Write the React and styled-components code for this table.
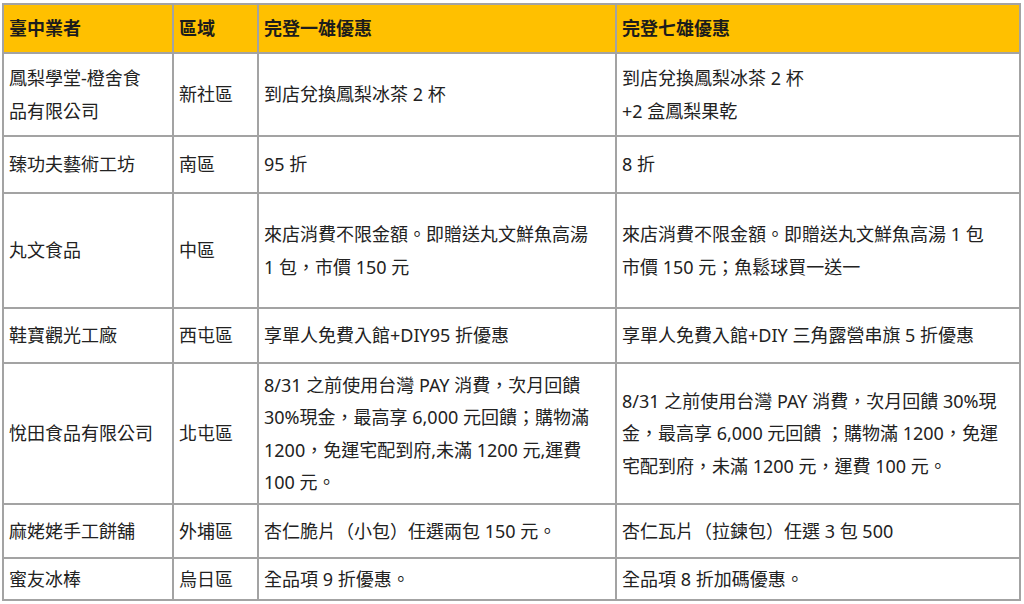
import React from "react";
import styled, { createGlobalStyle } from "styled-components";

const GlobalStyle = createGlobalStyle`
  html, body {
    margin: 0;
    padding: 0;
    background: #fff;
  }
  body {
    font-family: "Noto Sans", "Noto Sans CJK TC", sans-serif;
    color: #222;
  }
`;

const Page = styled.div`
  padding: 3px 0 0 2px;
`;

const Table = styled.table`
  border-collapse: collapse;
  table-layout: fixed;
  width: 1017px;
  font-size: 18px;
  line-height: 32.5px;
  font-feature-settings: "locl" 1;
`;

const Col = styled.col`
  width: ${(p) => p.$w}px;
`;

const HeadRow = styled.tr`
  height: 49px;
  background: #ffc000;
`;

const HeadCell = styled.th`
  border: 2px solid #a3a3a3;
  padding: 0 6px 0 5px;
  text-align: left;
  font-weight: 700;
  color: #1c1c1c;
  vertical-align: middle;
`;

const Row = styled.tr`
  height: ${(p) => p.$h}px;
`;

const Cell = styled.td`
  border: 2px solid #a3a3a3;
  padding: 0 6px 0 5px;
  vertical-align: middle;
  white-space: nowrap;
`;

const shops = [
  {
    h: 83,
    name: ["鳳梨學堂-橙舍食", "品有限公司"],
    area: "新社區",
    one: ["到店兌換鳳梨冰茶 2 杯"],
    seven: ["到店兌換鳳梨冰茶 2 杯", "+2 盒鳳梨果乾"],
  },
  {
    h: 57,
    name: ["臻功夫藝術工坊"],
    area: "南區",
    one: ["95 折"],
    seven: ["8 折"],
  },
  {
    h: 115,
    name: ["丸文食品"],
    area: "中區",
    one: ["來店消費不限金額。即贈送丸文鮮魚高湯", "1 包，市價 150 元"],
    seven: ["來店消費不限金額。即贈送丸文鮮魚高湯 1 包", "市價 150 元；魚鬆球買一送一"],
  },
  {
    h: 55,
    name: ["鞋寶觀光工廠"],
    area: "西屯區",
    one: ["享單人免費入館+DIY95 折優惠"],
    seven: ["享單人免費入館+DIY 三角露營串旗 5 折優惠"],
  },
  {
    h: 141,
    name: ["悅田食品有限公司"],
    area: "北屯區",
    one: [
      "8/31 之前使用台灣 PAY 消費，次月回饋",
      "30%現金，最高享 6,000 元回饋；購物滿",
      "1200，免運宅配到府,未滿 1200 元,運費",
      "100 元。",
    ],
    seven: [
      "8/31 之前使用台灣 PAY 消費，次月回饋 30%現",
      "金，最高享 6,000 元回饋 ；購物滿 1200，免運",
      "宅配到府，未滿 1200 元，運費 100 元。",
    ],
  },
  {
    h: 54,
    name: ["麻姥姥手工餅舖"],
    area: "外埔區",
    one: ["杏仁脆片（小包）任選兩包 150 元。"],
    seven: ["杏仁瓦片（拉鍊包）任選 3 包 500"],
  },
  {
    h: 42,
    name: ["蜜友冰棒"],
    area: "烏日區",
    one: ["全品項 9 折優惠。"],
    seven: ["全品項 8 折加碼優惠。"],
  },
];

function Lines({ lines }) {
  return lines.map((l, i) => (
    <React.Fragment key={i}>
      {i > 0 && <br />}
      {l}
    </React.Fragment>
  ));
}

function App() {
  return (
    <Page lang="zh-TW">
      <GlobalStyle />
      <Table>
        <colgroup>
          <Col $w={170} />
          <Col $w={85} />
          <Col $w={358} />
          <Col $w={404} />
        </colgroup>
        <thead>
          <HeadRow>
            <HeadCell>臺中業者</HeadCell>
            <HeadCell>區域</HeadCell>
            <HeadCell>完登一雄優惠</HeadCell>
            <HeadCell>完登七雄優惠</HeadCell>
          </HeadRow>
        </thead>
        <tbody>
          {shops.map((s) => (
            <Row key={s.area} $h={s.h}>
              <Cell>
                <Lines lines={s.name} />
              </Cell>
              <Cell>{s.area}</Cell>
              <Cell>
                <Lines lines={s.one} />
              </Cell>
              <Cell>
                <Lines lines={s.seven} />
              </Cell>
            </Row>
          ))}
        </tbody>
      </Table>
    </Page>
  );
}

export default App;
